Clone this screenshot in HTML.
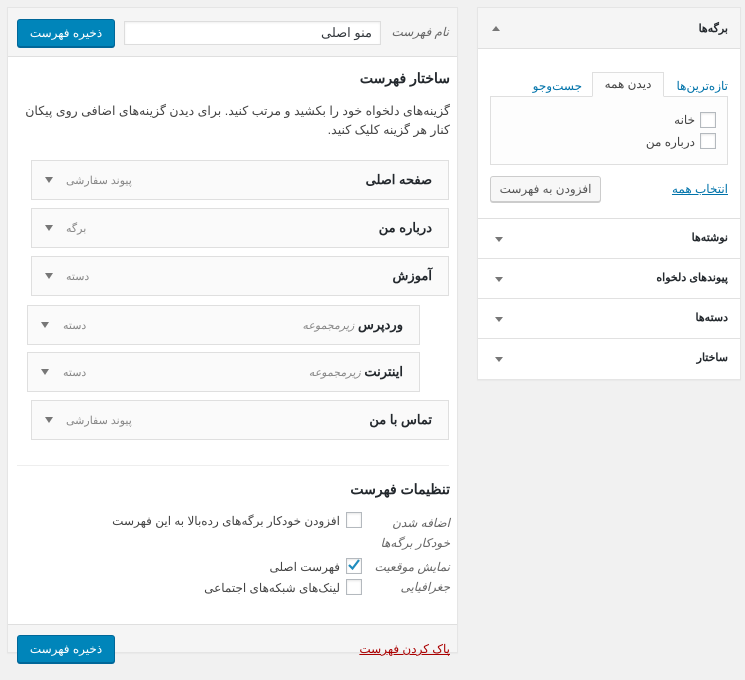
<!DOCTYPE html>
<html dir="rtl"><head><meta charset="utf-8"><style>
*{box-sizing:border-box;margin:0;padding:0}
body{width:745px;height:680px;background:#f1f1f1;font-family:"Liberation Sans","Noto Sans CJK SC",sans-serif;font-size:12px;color:#444;position:relative;overflow:hidden}
.a{position:absolute}
.panel{background:#fff;border:1px solid #e5e5e5;box-shadow:0 1px 1px rgba(0,0,0,.04)}
.btn{background:#0085ba;border:1px solid #006799;border-radius:3px;color:#fff;font-size:12px;text-align:center;line-height:26px;box-shadow:0 1px 0 #006799}
.item{background:#fafafa;border:1px solid #dfdfdf;height:40px}
.item .t{position:absolute;right:16px;top:11px;font-weight:bold;font-size:13px;color:#23282d}
.item .s{position:absolute;top:13px;font-size:11px;color:#888}
.item .st{position:absolute;left:13px;top:16px;width:0;height:0;border-left:4px solid transparent;border-right:4px solid transparent;border-top:6px solid #777}
.cb{position:absolute;width:16px;height:16px;border:1px solid #b4b9be;background:#fff;box-shadow:inset 0 1px 2px rgba(0,0,0,.1)}
.row{position:absolute;left:0;right:0;height:40px;border-top:1px solid #e1e1e1}
.row .t{position:absolute;right:12px;top:12px;font-weight:bold;font-size:11px;color:#23282d}
.row .st{position:absolute;left:17px;top:18px;width:0;height:0;border-left:4px solid transparent;border-right:4px solid transparent;border-top:5px solid #777}
.r{position:absolute;text-align:right;white-space:nowrap}
</style></head><body>

<div class="a panel" style="left:7px;top:7px;width:451px;height:646px">
  <div class="a" style="left:0;top:0;right:0;height:49px;background:#f5f5f5;border-bottom:1px solid #dfdfdf"></div>
  <div class="a" style="left:0;bottom:0;right:0;height:28px;background:#f5f5f5;border-top:1px solid #dfdfdf"></div>
</div>
<div class="a btn" style="left:17px;top:19px;width:98px;height:28px">ذخیره فهرست</div>
<div class="a" style="left:124px;top:21px;width:257px;height:24px;border:1px solid #ddd;background:#fff;box-shadow:inset 0 1px 2px rgba(0,0,0,.07);font-size:13px;color:#32373c;padding:3px 8px;text-align:right">منو اصلی</div>
<div class="r" style="right:296px;top:25px;font-style:italic;color:#666">نام فهرست</div>

<div class="r" style="right:295px;top:70px;font-size:14px;font-weight:bold;color:#23282d">ساختار فهرست</div>
<div class="a" style="left:10px;right:295px;top:102px;text-align:right;font-size:12.5px;line-height:19px;color:#444">گزینه‌های دلخواه خود را بکشید و مرتب کنید. برای دیدن گزینه‌های اضافی روی پیکان کنار هر گزینه کلیک کنید.</div>

<div class="a item" style="left:31px;top:160px;width:418px"><span class="t">صفحه اصلی</span><span class="s" style="left:34px">پیوند سفارشی</span><span class="st"></span></div>
<div class="a item" style="left:31px;top:208px;width:418px"><span class="t">درباره من</span><span class="s" style="left:34px">برگه</span><span class="st"></span></div>
<div class="a item" style="left:31px;top:256px;width:418px"><span class="t">آموزش</span><span class="s" style="left:34px">دسته</span><span class="st"></span></div>
<div class="a item" style="left:27px;top:305px;width:393px"><span class="t">وردپرس <span style="font-weight:normal;font-size:11px;color:#888;font-style:italic">زیرمجموعه</span></span><span class="s" style="left:35px">دسته</span><span class="st"></span></div>
<div class="a item" style="left:27px;top:352px;width:393px"><span class="t">اینترنت <span style="font-weight:normal;font-size:11px;color:#888;font-style:italic">زیرمجموعه</span></span><span class="s" style="left:35px">دسته</span><span class="st"></span></div>
<div class="a item" style="left:31px;top:400px;width:418px"><span class="t">تماس با من</span><span class="s" style="left:34px">پیوند سفارشی</span><span class="st"></span></div>

<div class="a" style="left:17px;top:465px;width:432px;border-top:1px solid #eee"></div>
<div class="r" style="right:295px;top:481px;font-size:14px;font-weight:bold;color:#23282d">تنظیمات فهرست</div>
<div class="a" style="left:368px;top:513px;width:82px;text-align:right;font-style:italic;color:#666;line-height:20px">اضافه شدن خودکار برگه‌ها</div>
<div class="cb" style="left:346px;top:512px"></div>
<div class="r" style="right:405px;top:514px;font-size:12px">افزودن خودکار برگه‌های رده‌بالا به این فهرست</div>
<div class="a" style="left:368px;top:557px;width:82px;text-align:right;font-style:italic;color:#666;line-height:20px">نمایش موقعیت جغرافیایی</div>
<div class="cb" style="left:346px;top:558px"><svg width="16" height="16" style="position:absolute;left:-1px;top:-2px"><path d="M3 8l3.5 3.5L13 3" stroke="#1e8cbe" stroke-width="2.2" fill="none"/></svg></div>
<div class="r" style="right:405px;top:560px;font-size:12px">فهرست اصلی</div>
<div class="cb" style="left:346px;top:579px"></div>
<div class="r" style="right:405px;top:581px;font-size:12px">لینک‌های شبکه‌های اجتماعی</div>

<div class="a btn" style="left:17px;top:635px;width:98px;height:28px">ذخیره فهرست</div>
<div class="r" style="right:295px;top:642px;color:#a00;text-decoration:underline">پاک کردن فهرست</div>

<div class="a panel" style="left:477px;top:7px;width:264px;height:373px">
  <div class="a" style="left:0;top:0;right:0;height:41px;background:#f5f5f5;border-bottom:1px solid #dfdfdf"></div>
  <div class="a" style="right:12px;top:14px;font-weight:bold;font-size:11px;color:#23282d">برگه‌ها</div>
  <div class="a" style="left:14px;top:18px;width:0;height:0;border-left:4px solid transparent;border-right:4px solid transparent;border-bottom:5px solid #777"></div>
  <div class="a" style="right:12px;top:71px;color:#0073aa">تازه‌ترین‌ها</div>
  <div class="a" style="right:76px;top:64px;width:72px;height:25px;border:1px solid #dfdfdf;border-bottom:1px solid #fdfdfd;background:#fdfdfd;text-align:center;line-height:22px;color:#444;z-index:2">دیدن همه</div>
  <div class="a" style="right:158px;top:71px;color:#0073aa">جست‌وجو</div>
  <div class="a" style="left:12px;top:88px;width:238px;height:69px;border:1px solid #dfdfdf;background:#fdfdfd"></div>
  <div class="cb" style="left:222px;top:104px"></div>
  <div class="a" style="right:45px;top:105px">خانه</div>
  <div class="cb" style="left:222px;top:125px"></div>
  <div class="a" style="right:45px;top:127px">درباره من</div>
  <div class="a" style="right:12px;top:174px;color:#0073aa;text-decoration:underline">انتخاب همه</div>
  <div class="a" style="left:12px;top:168px;width:111px;height:26px;border:1px solid #ccc;border-radius:3px;background:#f7f7f7;box-shadow:0 1px 0 #ccc;text-align:center;line-height:24px;color:#555">افزودن به فهرست</div>
  <div class="row" style="top:210px;border-top:1px solid #dfdfdf"><span class="t">نوشته‌ها</span><span class="st"></span></div>
  <div class="row" style="top:250px"><span class="t">پیوندهای دلخواه</span><span class="st"></span></div>
  <div class="row" style="top:290px"><span class="t">دسته‌ها</span><span class="st"></span></div>
  <div class="row" style="top:330px"><span class="t">ساختار</span><span class="st"></span></div>
</div>
</body></html>
